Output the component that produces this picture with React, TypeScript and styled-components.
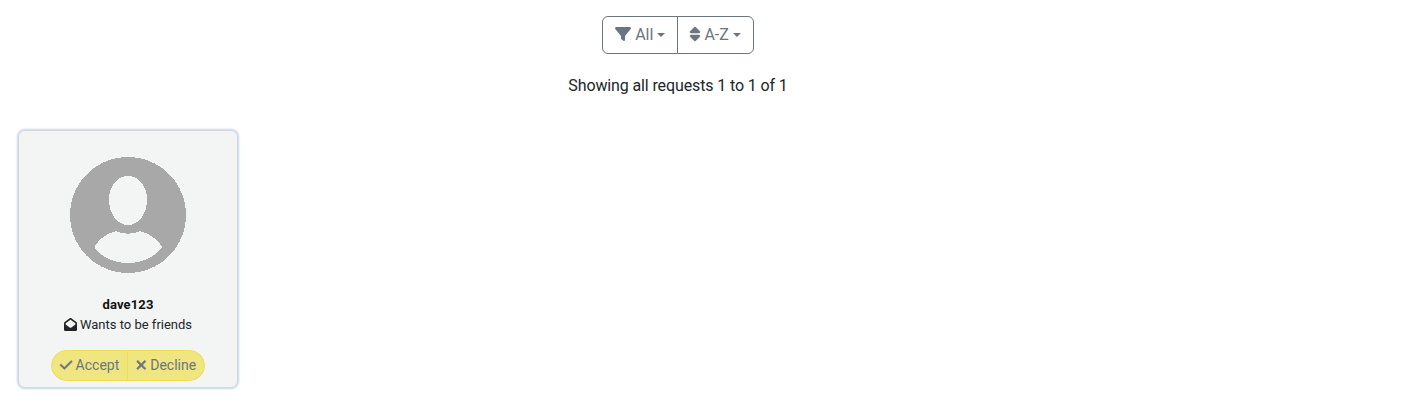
import React from "react";
import styled, { createGlobalStyle } from "styled-components";
import { FaFilter, FaSort, FaEnvelopeOpen, FaCheck, FaXmark } from "react-icons/fa6";

const GlobalStyle = createGlobalStyle`
  * { box-sizing: border-box; }
  body { margin: 0; background: #fff; color: #212529; font-family: Roboto, sans-serif; font-size: 16px; line-height: 24px; }
  button { font-family: inherit; margin: 0; cursor: pointer; }
`;

const Page = styled.main`
  width: 1356px;
  min-height: 410px;
  padding-top: 16px;
  display: flex;
  flex-direction: column;
`;

const ButtonGroup = styled.div`
  display: flex;
  align-self: center;
`;

const FilterButton = styled.button`
  display: flex;
  align-items: center;
  height: 38px;
  padding: 0 12px;
  border: 1px solid #6c757d;
  background: transparent;
  color: #6c757d;
  font-size: 16px;
  line-height: 24px;
  &:first-child { border-radius: 6px 0 0 6px; }
  &:last-child { border-radius: 0 6px 6px 0; margin-left: -1px; }
`;

const Icon = styled.span<{ $width: number; $height: number; $weight?: number; $lift?: number }>`
  display: flex;
  flex: none;
  margin-bottom: ${(p) => p.$lift ?? 0}px;
  svg {
    width: ${(p) => p.$width}px;
    height: ${(p) => p.$height}px;
    stroke-width: ${(p) => p.$weight ?? 0};
    overflow: visible;
  }
`;

const Label = styled.span`
  margin-left: 4px;
`;

const Caret = styled.span`
  margin-left: 4px;
  border-top: 4.8px solid;
  border-left: 4.8px solid transparent;
  border-right: 4.8px solid transparent;
`;

const Summary = styled.p`
  margin: 20px 0 0;
  text-align: center;
  letter-spacing: -0.12px;
`;

const Card = styled.article`
  width: 220px;
  height: 258px;
  margin: 32px 0 0 18px;
  padding-top: 25px;
  display: flex;
  flex-direction: column;
  align-items: center;
  border: 1px solid #d9d7de;
  border-radius: 7px;
  background: #f3f5f4;
  box-shadow: 0 0 2px 1px #c3d7e9;
  font-size: 13px;
  line-height: 20px;
`;

const Avatar = styled.svg`
  width: 118px;
  height: 118px;
  flex: none;
`;

const Name = styled.strong`
  margin-top: 21px;
  font-weight: 700;
  letter-spacing: 0.15px;
  color: #111;
`;

const Status = styled.div`
  display: flex;
  align-items: center;
  gap: 3px;
`;

const Actions = styled.div`
  display: flex;
  margin-top: 15px;
`;

const ActionButton = styled.button`
  display: flex;
  align-items: center;
  gap: 3.5px;
  height: 31px;
  padding: 0 8px;
  border: 1px solid #f0de50;
  background: #f0e681;
  color: #6c757d;
  font-size: 14px;
  line-height: 21px;
  &:first-child { border-radius: 16px 0 0 16px; }
  &:last-child { border-radius: 0 16px 16px 0; margin-left: -1px; }
`;

export default function App() {
  return (
    <>
      <GlobalStyle />
      <Page>
        <ButtonGroup>
          <FilterButton>
            <Icon $width={16} $height={16} $lift={2}><FaFilter /></Icon>
            <Label>All</Label>
            <Caret />
          </FilterButton>
          <FilterButton>
            <Icon $width={10} $height={16} $weight={16} $lift={2}><FaSort /></Icon>
            <Label>A-Z</Label>
            <Caret />
          </FilterButton>
        </ButtonGroup>
        <Summary>Showing all requests 1 to 1 of 1</Summary>
        <Card>
          <Avatar viewBox="0 0 118 118" shapeRendering="crispEdges">
            <circle cx="59" cy="59" r="58" fill="#a8a8a8" />
            <path d="M59 20C69.500 20 78 30 78 43C78 58 70 69 59 69C48 69 40 58 40 43C40 30 48.500 20 59 20Z" fill="#f3f5f4" />
            <path d="M47 75Q59 80.500 71 75C80 77 88 83 92.500 90Q93 91.500 92 93C83 103 71 107 59 107C47 107 35 103 26 93Q25 91.500 26 90C30 83 38 77 47 75Z" fill="#f3f5f4" />
          </Avatar>
          <Name>dave123</Name>
          <Status>
            <Icon $width={13} $height={13} $lift={1}><FaEnvelopeOpen /></Icon>
            <span>Wants to be friends</span>
          </Status>
          <Actions>
            <ActionButton>
              <Icon $width={12.25} $height={14} $weight={18} $lift={1}><FaCheck /></Icon>
              <span>Accept</span>
            </ActionButton>
            <ActionButton>
              <Icon $width={10.5} $height={14} $weight={26} $lift={1}><FaXmark /></Icon>
              <span>Decline</span>
            </ActionButton>
          </Actions>
        </Card>
      </Page>
    </>
  );
}
